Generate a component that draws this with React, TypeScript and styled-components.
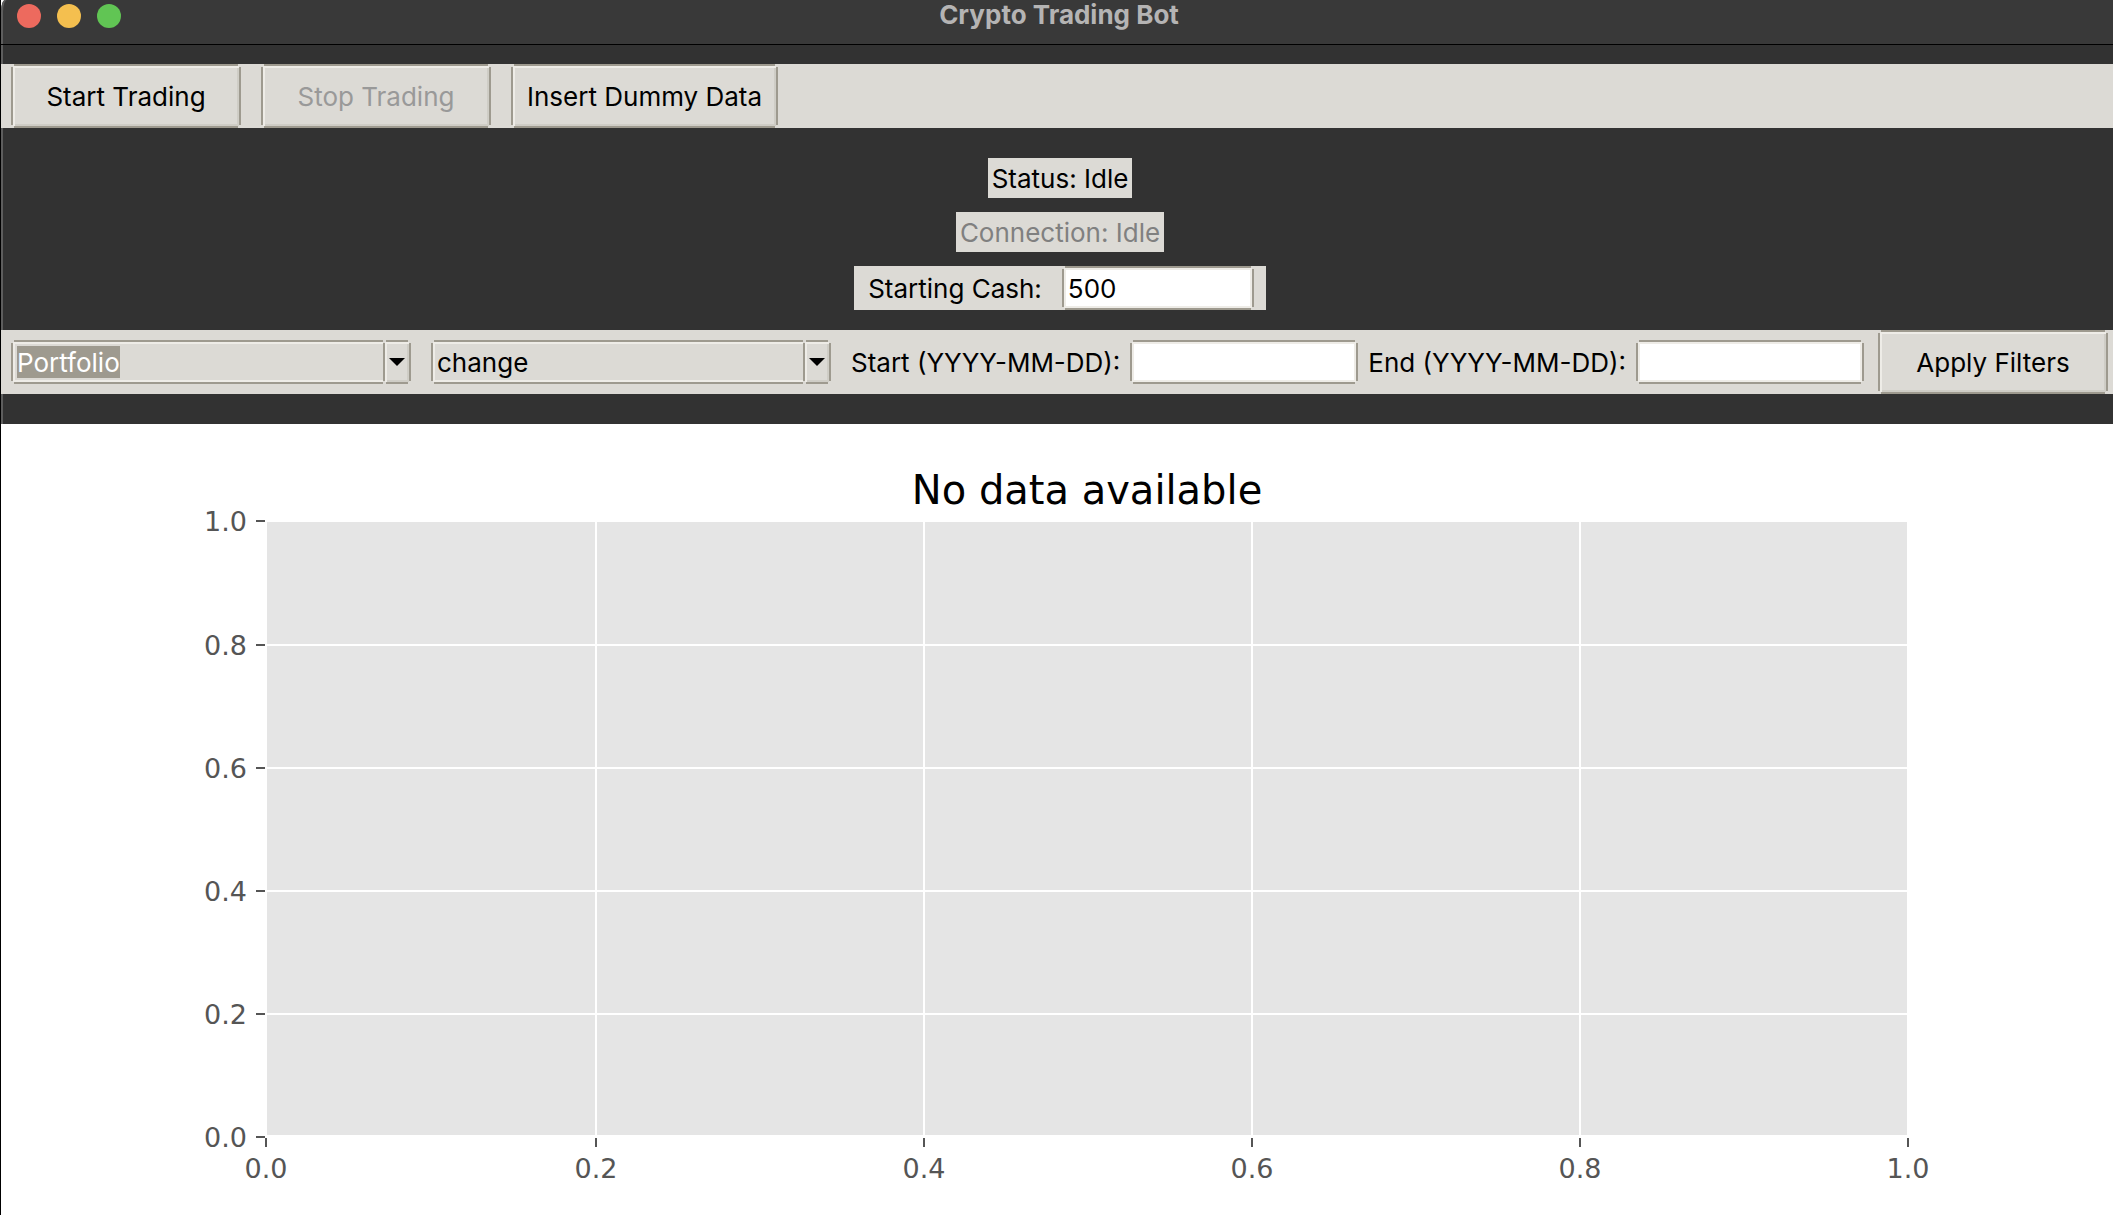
import React, { useState } from "react";
import styled, { createGlobalStyle, css } from "styled-components";

const color = {
  face: "#dcdad5",
  edge: "#9e9a8f",
  light: "#eeece7",
  shade: "#cfcdc6",
  dark: "#323232",
};

const GlobalStyle = createGlobalStyle`
  *, *::before, *::after { box-sizing: border-box; }
  body {
    margin: 0;
    background: #ffffff;
    font-family: Inter, "Liberation Sans", sans-serif;
    font-size: 26px;
    line-height: 32px;
    color: #000000;
  }
  button, input, select { font: inherit; color: inherit; }
`;

/* Two-pixel frame with open corners and an inner highlight and shadow. */
const bevel = (fill: string, light: string, shade: string) => css`
  border: 0;
  border-radius: 0;
  background:
    linear-gradient(${color.edge}, ${color.edge}) center top / calc(100% - 6px) 2px,
    linear-gradient(${color.edge}, ${color.edge}) center bottom / calc(100% - 6px) 2px,
    linear-gradient(${color.edge}, ${color.edge}) left center / 2px calc(100% - 6px),
    linear-gradient(${color.edge}, ${color.edge}) right center / 2px calc(100% - 6px),
    linear-gradient(${fill}, ${fill}) center / calc(100% - 8px) calc(100% - 8px),
    linear-gradient(${shade}, ${shade}) right 2px bottom 2px / 2px calc(100% - 6px),
    linear-gradient(${shade}, ${shade}) right 2px bottom 2px / calc(100% - 6px) 2px,
    linear-gradient(${light}, ${light}) center / calc(100% - 4px) calc(100% - 4px),
    ${color.face};
  background-repeat: no-repeat;
`;

const Window = styled.div`
  min-height: 100vh;
  border-left: 1px solid #000000;
  background: #ffffff;
`;

const TitleBar = styled.header`
  display: grid;
  grid-template-columns: 1fr auto 1fr;
  align-items: center;
  height: 45px;
  padding: 0 0 12px 4px;
  border-bottom: 1px solid #000000;
  border-top-left-radius: 4px 12px;
  background: #393939;
  box-shadow: inset 2px 0 0 #5e5e5e;
`;

const Lights = styled.div`
  display: flex;
  gap: 16px;
  padding-left: 12px;
`;

const Light = styled.button<{ $color: string }>`
  width: 24px;
  height: 24px;
  padding: 0;
  border: 0;
  border-radius: 50%;
  background: ${(p) => p.$color};
`;

const Title = styled.h1`
  margin: 0;
  padding-bottom: 2px;
  font-size: 26px;
  font-weight: 700;
  line-height: 30px;
  color: #b5b4b4;
`;

const Body = styled.main`
  padding-top: 19px;
  background: ${color.dark};
  box-shadow: inset 2px 0 0 #5e5e5e;
`;

const Toolbar = styled.div`
  display: flex;
  gap: 20px;
  padding: 0 10px;
  background: ${color.face};
`;

const Button = styled.button`
  flex: none;
  min-width: 230px;
  height: 64px;
  padding: 2px 16px 0;
  white-space: nowrap;
  ${bevel(color.face, color.light, color.shade)}
  &:disabled { color: #999999; }
`;

const StatusArea = styled.section`
  display: flex;
  flex-direction: column;
  align-items: center;
  gap: 14px;
  padding: 30px 0 20px 6px;
`;

const StatusLabel = styled.div<{ $muted?: boolean }>`
  padding: 5px 4px 3px;
  background: ${color.face};
  color: ${(p) => (p.$muted ? "#808080" : "#000000")};
`;

const CashRow = styled.div`
  display: flex;
  align-items: center;
  gap: 20px;
  padding: 0 12px 0 14px;
  background: ${color.face};
`;

const Label = styled.label`
  padding-top: 2px;
  white-space: nowrap;
`;

const Entry = styled.input<{ $width: number }>`
  width: ${(p) => p.$width}px;
  height: 44px;
  padding: 0 6px;
  outline: 0;
  ${bevel("#ffffff", color.light, color.light)}
`;

const FilterBar = styled.form`
  display: flex;
  align-items: center;
  gap: 10px;
  padding-left: 10px;
  background: ${color.face};

  ${Button} { margin-left: 4px; }
`;

const Combo = styled.div`
  display: grid;
  grid-template-columns: 1fr 28px;
  flex: none;
  width: 400px;
  height: 44px;
  margin-right: 10px;
`;

const Select = styled.select<{ $covered?: boolean }>`
  grid-area: 1 / 1 / 2 / 3;
  appearance: none;
  padding: 2px 34px 0 6px;
  outline: 0;
  ${bevel(color.face, color.light, color.light)}
  color: ${(p) => (p.$covered ? "transparent" : "#000000")};

  option { color: #000000; }
`;

const SelectedText = styled.span`
  grid-area: 1 / 1;
  align-self: center;
  justify-self: start;
  margin-left: 6px;
  padding-top: 2px;
  line-height: 30px;
  background: ${color.edge};
  color: #ffffff;
  pointer-events: none;
`;

const ArrowBox = styled.span`
  grid-area: 1 / 2;
  display: grid;
  place-items: center;
  pointer-events: none;
  ${bevel(color.face, color.light, color.shade)}
`;

const Chart = styled.svg`
  display: block;
  width: 100%;
  margin-top: 30px;
  background: #ffffff;
  font-family: "DejaVu Sans", sans-serif;
`;

const TickLabel = styled.text`
  font-size: 27px;
  fill: #555555;
`;

const ChartTitle = styled.text`
  font-size: 40px;
  fill: #000000;
`;

type ComboBoxProps = { label: string; options: string[]; selected?: boolean };

function ComboBox({ label, options, selected }: ComboBoxProps) {
  const [value, setValue] = useState(options[0]);
  return (
    <Combo>
      <Select
        aria-label={label}
        $covered={selected}
        value={value}
        onChange={(e) => setValue(e.target.value)}
      >
        {options.map((o) => (
          <option key={o}>{o}</option>
        ))}
      </Select>
      {selected && <SelectedText aria-hidden="true">{value}</SelectedText>}
      <ArrowBox>
        <svg width="16" height="8" viewBox="0 0 16 8" aria-hidden="true">
          <path d="M0 0h16L8 8z" />
        </svg>
      </ArrowBox>
    </Combo>
  );
}

const xTicks = [265, 595, 923, 1251, 1579, 1907];
const yTicks = [713, 590, 467, 344, 221, 97];
const tickText = (i: number) => (i / 5).toFixed(1);

function EmptyChart() {
  return (
    <Chart viewBox="0 0 2112 791" role="img" aria-label="No data available">
      <ChartTitle x="1086" y="80" textAnchor="middle">No data available</ChartTitle>
      <rect x="266" y="98" width="1640" height="613" fill="#e5e5e5" />
      {xTicks.map((x, i) => (
        <g key={x}>
          {i > 0 && i < 5 && <rect x={x - 1} y="98" width="2" height="613" fill="#ffffff" />}
          <rect x={x - 1} y="714" width="2" height="9" fill="#555555" />
          <TickLabel x={x} y="754" textAnchor="middle">{tickText(i)}</TickLabel>
        </g>
      ))}
      {yTicks.map((y, i) => (
        <g key={y}>
          {i > 0 && i < 5 && <rect x="266" y={y - 1} width="1640" height="2" fill="#ffffff" />}
          <rect x="255" y={y - 1} width="9" height="2" fill="#555555" />
          <TickLabel x="246" y={y + 10} textAnchor="end">{tickText(i)}</TickLabel>
        </g>
      ))}
    </Chart>
  );
}

export default function App() {
  const [cash, setCash] = useState("500");
  return (
    <>
      <GlobalStyle />
      <Window>
        <TitleBar>
          <Lights>
            <Light $color="#ed6a5e" aria-label="Close" />
            <Light $color="#f4bf4f" aria-label="Minimize" />
            <Light $color="#61c554" aria-label="Zoom" />
          </Lights>
          <Title>Crypto Trading Bot</Title>
        </TitleBar>
        <Body>
          <Toolbar>
            <Button type="button">Start Trading</Button>
            <Button type="button" disabled>Stop Trading</Button>
            <Button type="button">Insert Dummy Data</Button>
          </Toolbar>
          <StatusArea>
            <StatusLabel>Status: Idle</StatusLabel>
            <StatusLabel $muted>Connection: Idle</StatusLabel>
            <CashRow>
              <Label htmlFor="cash">Starting Cash:</Label>
              <Entry id="cash" $width={192} value={cash} onChange={(e) => setCash(e.target.value)} />
            </CashRow>
          </StatusArea>
          <FilterBar onSubmit={(e) => e.preventDefault()}>
            <ComboBox label="Source" options={["Portfolio"]} selected />
            <ComboBox label="Metric" options={["change"]} />
            <Label htmlFor="start">Start (YYYY-MM-DD):</Label>
            <Entry id="start" $width={228} />
            <Label htmlFor="end">End (YYYY-MM-DD):</Label>
            <Entry id="end" $width={228} />
            <Button type="submit">Apply Filters</Button>
          </FilterBar>
          <EmptyChart />
        </Body>
      </Window>
    </>
  );
}
